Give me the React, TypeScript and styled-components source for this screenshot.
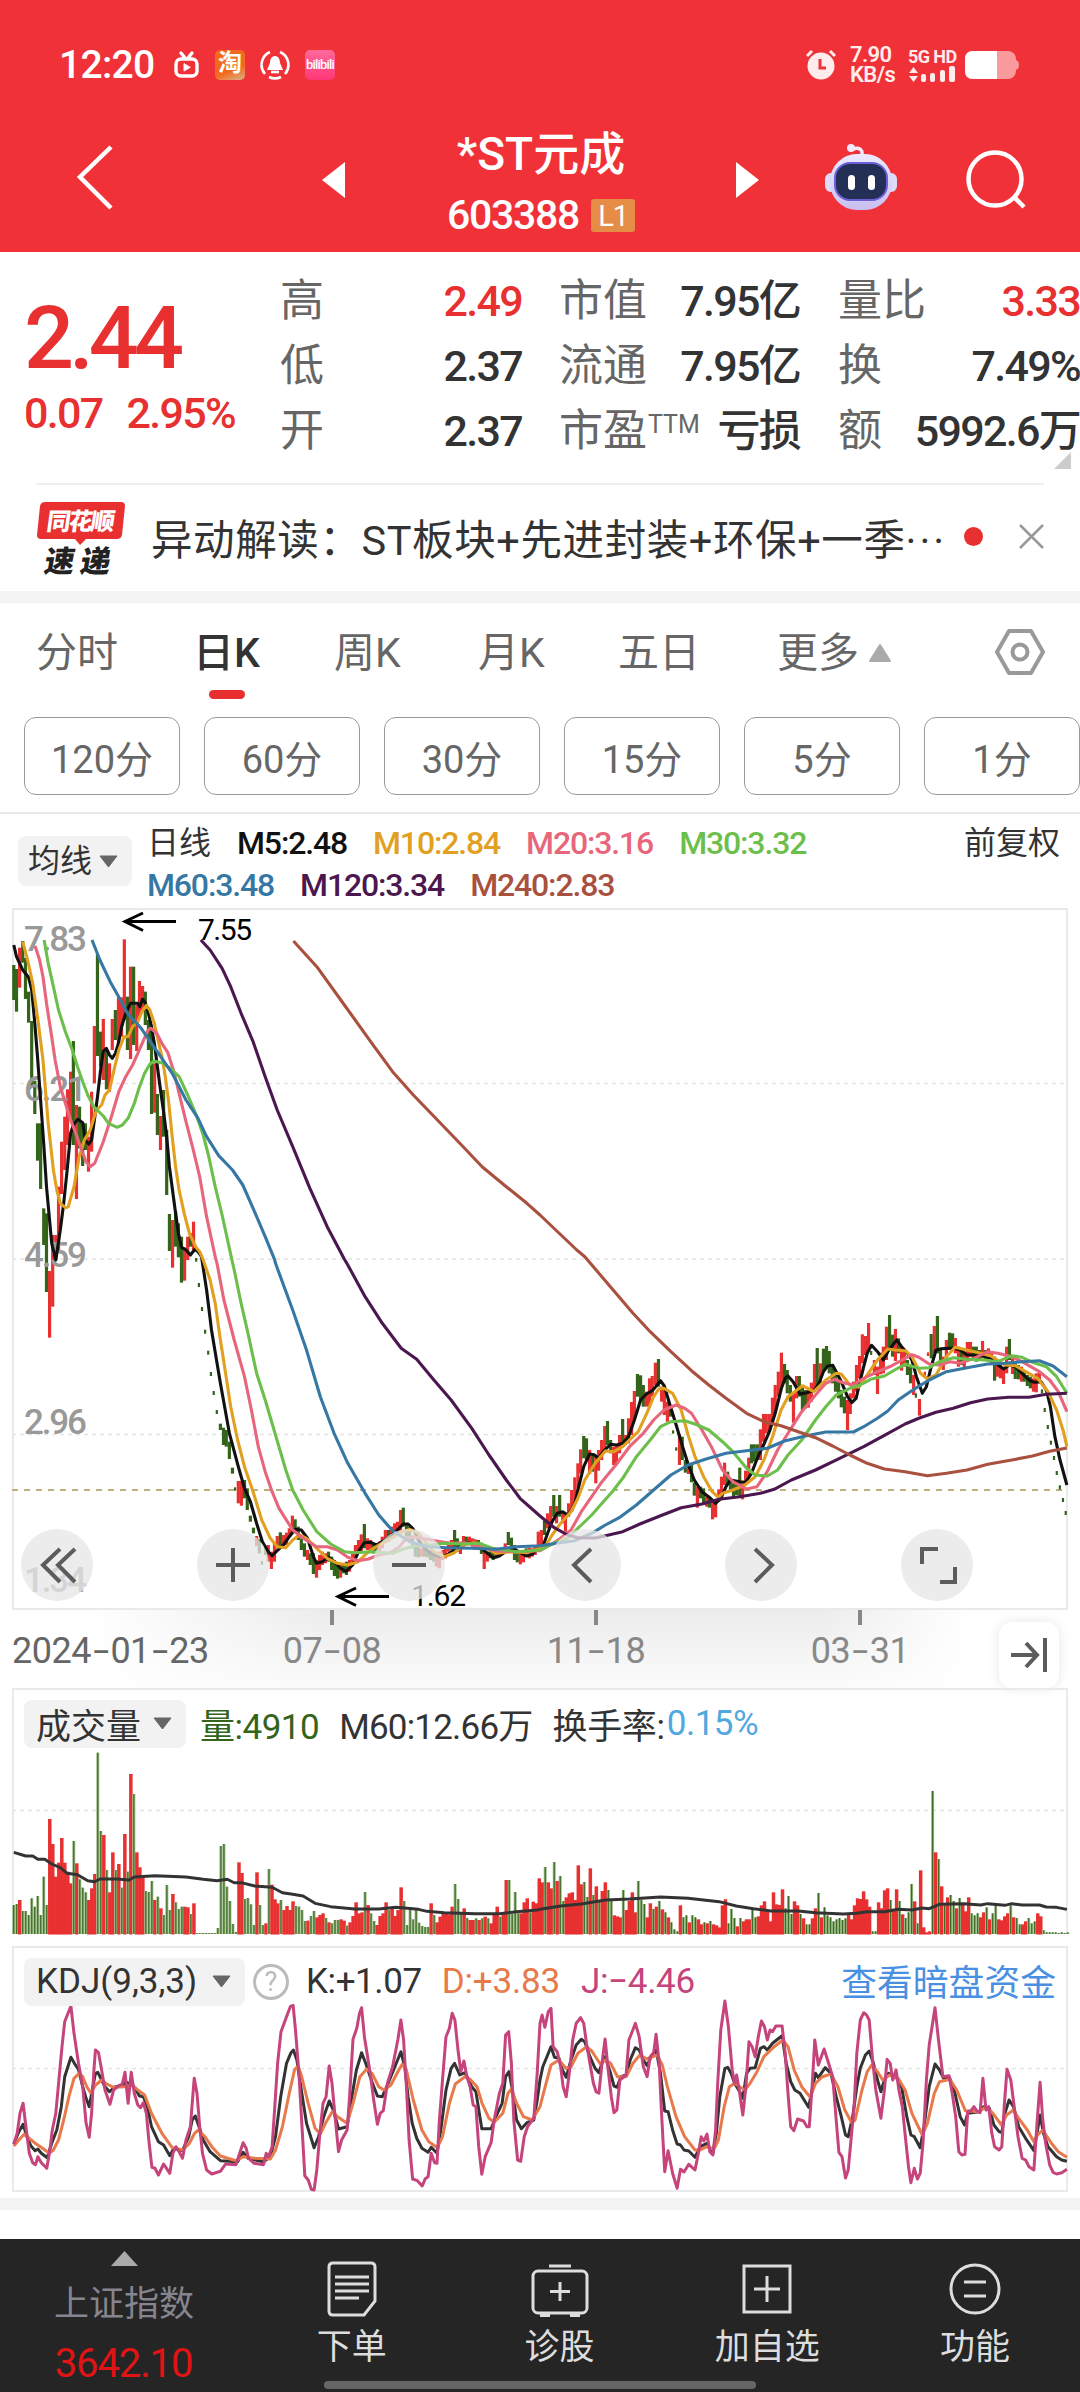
import React from 'react';
import styled, { createGlobalStyle } from 'styled-components';

const FONT = "Roboto, 'Noto Sans CJK SC', sans-serif";

const RED = '#e83030';
const GREEN = '#34641a';

// One unit of the recorded series is UX by UY pixels
const UX = 540 / 1568;
const UY = 1 / 3;

type Part = { x: number; y: number; d: string };

const points = (parts: Part[]) =>
  parts
    .map((p) =>
      p.d
        .trim()
        .split(/\s+/)
        .map((pair) => {
          const [a, b] = pair.split(',').map(Number);
          return `${(p.x + a * UX).toFixed(1)},${(p.y + b * UY).toFixed(1)}`;
        })
        .join(' ')
    )
    .join(' ');

const topLeft = (d: string): Part => ({ x: 0, y: -18, d });
const bottomLeft = (d: string): Part => ({ x: 0, y: 342, d });
const bottomRight = (d: string): Part => ({ x: 540, y: 342, d });
const kdjLeft = (d: string): Part => ({ x: 0, y: -6, d });
const kdjRight = (d: string): Part => ({ x: 540, y: -6, d });

const candleParts: Part[] = [
  topLeft(`g40,225,330 g48,237,365 r57,173,293 g66,153,218 g74,204,327 g83,305,398 g92,393,590 g101,572,672 g109,700,812
  g118,700,897 g127,955,1065 g135,970,1206 r144,1143,1343 r153,1035,1250 r162,1035,1110 r170,890,1080 r179,755,912
  r188,680,840 r196,598,765 r205,545,690 g213,453,765 r222,645,927 g231,650,775 g240,700,828 g248,700,780 r257,740,845
  r266,605,785 r274,408,580 g283,192,498 g292,425,530 r300,387,570 g309,480,598 r318,520,605 r326,387,480 g335,360,450
  r344,322,465 r353,322,440 r361,148,390 g370,320,480 r379,230,507 g388,230,465 r397,345,483 r405,273,380 r414,288,360
  g422,305,405 g431,390,480 g440,420,672 r449,520,668 g457,612,735 r466,678,780 g475,600,740 g484,720,915 g492,972,1083
  r501,990,1133 g510,965,1070 g518,1000,1102 g527,1040,1178 r536,1072,1172 r545,1040,1110 g553,1030,1070 r562,995,1080`),
  bottomLeft(`g571,24,35 g579,99,111 g588,171,183 g597,239,251 g606,302,314 g614,366,378 g622,423,435 g631,480,492 g640,521,540
  g649,533,585 g657,540,590 g666,575,627 g675,653,671 g684,712,722 r692,693,760 r701,693,767 g710,690,745 g718,715,780
  g727,797,815 g736,833,850 r745,858,888 g753,868,910 g762,933,944 g771,890,915 r779,885,935 r788,905,957 r797,880,935
  r805,858,895 g814,847,890 r823,855,885 r832,848,885 r840,835,860 r849,797,850 g857,808,842 g866,830,870 g875,865,900
  g884,880,920 r893,900,930 g901,910,945 g910,910,972 r919,930,983 r928,915,960 r936,905,945 r945,910,940 g954,905,935
  g963,920,960 g971,930,978 g980,940,986 r989,945,983 g997,945,970 g1006,935,975 r1015,930,965 r1024,905,945
  r1032,885,930 r1041,870,910 r1049,853,905 g1058,822,895 r1067,865,900 r1076,870,900 g1084,880,910 g1093,885,910
  r1102,875,905 r1110,860,895 r1119,840,880 g1128,840,875 r1137,830,865 r1146,820,855 r1154,815,850 r1163,780,845
  g1171,773,830 g1180,820,860 g1189,830,870 g1198,860,895 g1206,880,920 g1215,890,922 r1224,895,920 g1233,895,920
  g1241,900,922 g1250,900,930 g1259,905,935 r1267,910,950 r1276,905,955 r1285,900,930 r1293,895,925 r1302,885,905
  r1311,870,900 g1320,840,895 g1328,865,905 r1337,880,912 r1346,858,890 g1354,860,885 r1363,860,885 r1372,865,890
  r1380,868,890 g1389,870,895 g1398,878,912 r1406,900,957 r1415,905,935 g1424,900,925 g1432,905,930 r1441,900,925
  r1450,895,915 r1459,893,915 r1467,880,905 g1476,846,885 g1485,863,900 g1494,885,930 g1502,905,937 r1511,910,943
  r1520,905,937 g1528,895,920 r1537,893,925 r1546,895,920 r1554,888,915 r1563,845,905`),
  bottomRight(`r4,840,885 g13,812,855 r22,790,835 r31,768,820 g40,735,800 r48,768,820 g57,735,800 r66,785,820 r74,795,845
  r83,760,800 r92,720,785 r101,682,760 r110,640,715 r118,598,670 g127,558,625 g135,565,630 r144,600,672 g153,618,665
  r162,620,700 r170,600,662 r179,570,630 r188,528,600 g196,513,585 g205,570,610 r214,590,645 r222,585,645 r231,555,610
  g240,507,585 r248,555,585 r257,505,580 r266,456,555 r274,423,510 g283,372,440 g292,376,455 g300,405,470 r309,425,470
  r318,385,470 r326,378,440 r335,338,405 g344,327,410 r353,410,455 r361,420,495 r370,455,515 g379,465,500 g388,541,551
  g397,592,602 r405,553,645 g413,560,630 g422,630,668 r431,645,672 g440,640,697 g448,698,737 r457,710,773 g466,710,745
  g475,715,765 r484,740,770 g492,745,773 r501,755,808 r510,755,802 r519,718,755 r527,680,735 r536,638,705 g545,665,700
  g553,690,720 g562,700,740 g571,695,735 g580,653,740 r588,700,748 r597,662,705 r606,623,680 g614,583,640 g622,583,635
  g631,583,630 r640,538,630 r649,492,575 r657,492,550 r666,492,545 r675,443,525 r683,405,485 r692,365,440 r701,308,410
  g710,342,400 g718,360,430 g727,405,455 r736,430,518 r745,378,445 g753,378,440 g762,410,480 g771,420,475 r779,420,473
  r788,398,455 r797,342,425 g805,294,420 r814,340,400 g823,296,365 g832,288,352 g840,303,370 g849,345,400 g858,365,425
  g867,395,445 g875,420,472 g884,440,490 r893,450,540 r901,430,492 r910,395,445 r919,345,425 r928,318,385 r936,253,340
  r945,258,315 r954,219,300 g963,303,315 r971,330,375 r980,350,432 r989,308,373 r997,290,370 r1006,230,330
  g1015,195,300 g1024,254,320 r1032,237,333 g1041,265,310 r1050,290,362 r1058,300,350 g1067,330,375 g1076,345,400
  r1085,375,435 g1093,430,443 r1102,447,497 r1119,365,378 r1128,307,318 g1136,252,325 r1145,228,310 g1154,198,310
  g1163,300,345 r1171,320,360 r1180,270,325 g1189,248,300 g1198,250,300 r1206,264,310 r1215,290,350 g1224,300,345
  r1232,305,355 r1241,276,330 r1250,276,320 g1259,290,330 g1267,290,335 g1276,300,332 r1285,273,325 g1294,300,330
  r1302,295,330 r1311,305,345 g1320,320,392 r1328,335,380 r1337,345,385 r1346,350,402 r1355,290,370 g1363,267,330
  r1372,325,372 g1380,340,387 g1389,345,388 r1398,350,395 g1406,365,395 g1415,375,408 g1424,380,415 r1433,385,425
  r1441,370,427 r1450,365,400 g1459,418,430 g1467,474,486 g1476,525,537 g1485,572,584 g1494,618,630 g1502,663,675
  g1511,706,718 g1520,744,756 g1528,783,795`),
];

const averages: { color: string; parts: Part[] }[] = [
  {
    color: '#111',
    parts: [
      topLeft(`40,165 48,200 66,240 83,262 92,300 101,400 109,500 118,630 127,760 135,890 150,1060 162,1110 175,1020 185,940
      196,830 205,730 213,705 226,688 240,698 248,752 258,762 266,750 274,690 283,620 292,540 300,484 309,475 318,495
      326,505 335,490 344,460 353,410 365,370 379,340 400,340 406,350 414,328 422,338 431,370 440,410 449,465 457,530
      466,600 475,665 484,740 492,830 501,900 510,970 518,1030 527,1072 540,1080 553,1095 566,1078 575,1085`),
      bottomLeft(`585,20 600,120 614,240 640,400 666,550 692,650 710,715 727,755 745,820 762,875 779,905 790,917 805,902
      823,885 840,860 857,838 875,840 893,865 910,920 919,940 936,935 954,922 971,935 989,955 1005,964 1024,945 1041,905
      1058,878 1076,877 1093,885 1110,875 1137,855 1154,840 1171,822 1185,822 1198,835 1206,850 1215,870 1233,895
      1250,910 1276,920 1293,918 1311,905 1328,895 1346,878 1372,880 1389,888 1406,902 1432,923 1450,918 1476,900
      1494,897 1511,908 1528,918 1546,912 1568,890`),
      bottomRight(`10,885 22,850 35,815 50,790 66,785 80,795 92,780 101,760 110,720 127,650 144,612 157,614 170,625 188,600
      205,583 222,585 240,580 257,560 274,510 292,450 309,432 326,422 340,405 350,392 361,408 379,470 397,530 414,590
      431,645 448,690 470,725 495,745 510,760 525,745 540,710 553,690 580,695 597,697 614,670 631,625 649,585 666,545
      683,490 701,415 712,385 720,378 735,395 755,432 775,428 797,420 810,400 823,365 835,348 850,346 860,365 875,395
      893,440 905,458 918,445 928,400 940,350 950,310 963,286 980,305 997,330 1010,305 1024,285 1036,270 1050,290
      1067,310 1080,330 1093,380 1110,430 1122,410 1136,350 1150,300 1165,296 1200,294 1220,300 1240,315 1276,315
      1311,325 1330,345 1346,357 1363,345 1380,350 1400,370 1420,390 1435,397 1455,395 1470,420 1482,470 1495,560
      1510,630 1530,705`),
    ],
  },
  {
    color: '#e2a021',
    parts: [
      topLeft(`66,155 80,210 95,280 110,390 125,510 140,700 155,840 165,900 175,940 190,953 198,950 215,890 230,800 245,750
      262,720 280,660 295,645 305,615 318,600 330,545 345,480 360,440 372,440 385,410 400,395 412,365 425,346 435,360
      448,400 460,455 470,500 480,560 490,640 500,740 510,830 520,900 535,970 550,1030 568,1070 580,1085`),
      bottomLeft(`590,30 610,90 625,160 640,270 655,370 670,470 690,570 710,650 735,725 760,810 785,865 805,890 830,893
      850,870 870,855 890,865 920,895 950,925 980,940 1010,945 1040,935 1070,905 1100,885 1130,868 1160,850 1190,838
      1215,850 1235,875 1260,905 1290,920 1320,908 1345,885 1375,878 1410,892 1440,910 1490,905 1530,908 1568,895`),
      bottomRight(`15,890 35,855 60,820 90,785 110,745 130,690 160,640 190,603 215,605 240,590 260,570 285,545 310,490
      330,440 345,417 360,415 385,430 410,480 430,555 450,620 475,680 500,725 518,742 530,730 560,720 595,705 625,680
      650,630 675,560 700,480 720,440 740,425 762,407 795,425 830,390 860,370 875,372 900,405 925,412 950,375 980,330
      1010,297 1030,300 1060,302 1080,320 1105,370 1125,387 1150,375 1180,320 1205,292 1240,300 1280,310 1310,318
      1350,345 1380,347 1410,365 1445,385 1475,425 1500,480 1520,545 1530,590`),
    ],
  },
  {
    color: '#e8667b',
    parts: [
      topLeft(`102,168 115,210 125,260 135,340 150,440 160,510 175,590 190,640 205,690 220,730 235,775 250,815 262,830
      275,820 300,755 325,675 345,605 365,560 385,525 400,490 415,455 430,420 438,415 455,430 470,460 487,487 505,545
      520,610 540,695 560,775 580,860 600,980 625,1100`),
      bottomLeft(`630,40 650,150 680,270 710,380 730,480 750,590 770,665 790,725 810,775 850,840 880,865 920,890 950,890
      980,900 1010,922 1040,932 1070,927 1100,915 1130,910 1160,890 1180,865 1200,860 1240,868 1280,875 1310,880
      1350,878 1400,890 1440,903 1500,905 1568,902`),
      bottomRight(`30,885 60,865 90,840 120,785 150,740 180,695 220,645 260,590 300,550 330,510 360,480 395,465 420,475
      440,490 470,540 500,595 530,660 560,695 600,717 630,710 660,665 690,600 720,550 760,485 800,435 830,400 855,388
      880,398 910,405 940,385 980,365 1020,348 1060,325 1080,314 1100,322 1130,342 1160,345 1190,335 1220,340 1260,325
      1300,305 1330,310 1370,320 1400,335 1450,365 1480,390 1505,425 1530,485`),
    ],
  },
  {
    color: '#6dbf4b',
    parts: [
      topLeft(`128,150 140,220 155,290 170,360 190,425 210,480 225,530 240,575 255,615 272,650 300,678 315,700 340,712
      355,705 372,685 390,640 405,590 420,550 435,523 447,513 475,520 500,540 520,560 545,615 570,675 590,735 605,795
      625,890 645,975 673,1108`),
      bottomLeft(`680,60 700,160 720,250 745,370 770,450 800,555 830,660 850,720 880,780 920,845 960,882 1000,905 1030,908
      1080,905 1140,910 1170,898 1210,885 1250,885 1290,880 1340,882 1390,880 1430,895 1500,905 1568,900`),
      bottomRight(`40,880 80,865 120,825 150,795 180,760 210,725 240,685 280,620 320,570 350,530 380,515 420,512 450,522
      490,540 530,575 560,605 600,655 625,675 660,678 690,660 720,615 760,570 800,510 830,470 860,435 900,415 930,405
      960,388 1000,378 1030,360 1060,343 1100,355 1130,353 1160,335 1200,323 1240,328 1290,330 1330,335 1370,317
      1400,322 1430,337 1470,350 1500,380 1530,430`),
    ],
  },
  {
    color: '#3677a4',
    parts: [
      topLeft(`267,150 290,210 320,275 350,330 370,370 410,415 440,460 470,505 500,550 540,630 575,685 600,740 635,797
      675,840 705,885 735,955 770,1040 797,1108`),
      bottomLeft(`800,40 850,180 890,300 930,440 970,550 1010,640 1060,730 1100,795 1140,842 1190,875 1240,890 1300,893
      1370,895 1440,898 1500,890 1568,887`),
      bottomRight(`50,880 100,872 150,850 190,825 230,803 280,765 330,720 380,675 430,645 480,628 540,610 600,602 660,595
      710,573 770,558 830,546 910,546 940,530 980,505 1010,483 1040,450 1090,415 1130,390 1180,365 1240,353 1300,342
      1350,340 1400,335 1450,332 1490,348 1530,380`),
    ],
  },
  {
    color: '#4b174f',
    parts: [
      topLeft(`583,150 610,180 645,235 670,290 700,370 735,455 770,560 805,660 850,770 900,895 950,1010 1000,1108`),
      bottomLeft(`1010,45 1060,140 1110,220 1165,295 1210,328 1260,390 1310,450 1370,535 1420,615 1470,690 1510,745
      1568,798`),
      bottomRight(`40,832 80,855 110,863 160,864 190,857 240,845 290,822 350,797 410,773 470,762 520,748 580,740 640,730
      680,718 730,690 800,660 870,625 940,590 1000,556 1060,522 1100,505 1150,487 1200,475 1250,458 1300,447 1360,442
      1420,442 1470,433 1530,430`),
    ],
  },
  {
    color: '#a9503f',
    parts: [
      topLeft(`852,153 920,230 1000,345 1080,460 1140,545 1200,615 1270,690 1340,765 1400,830 1470,890 1530,940 1568,975`),
      bottomRight(`107,0 130,20 200,105 270,190 320,245 380,305 440,362 490,405 540,445 600,490 650,515 700,527 750,545
      800,563 850,588 900,615 950,640 1000,657 1060,665 1125,677 1180,670 1240,660 1300,643 1370,630 1430,618 1480,604
      1530,594`),
    ],
  },
];

// Bar tops for the two halves of the volume pane, oldest first
const volumeOld = `g1005 g1002 r990 g1023 g1023 g1035 g985 g1010 g978 g1035 g920 g1005 r747 r822 r920 r878 r804 r878 r905
r940 g813 r880 g928 g953 g967 r990 r955 r912 g548 g783 r795 g900 r967 r847 g900 r882 g953 r792 g905 r612 g672 r847 r892
r920 g963 g966 g933 r990 g980 r1015 g1035 g945 g1020 r972 g997 g1017 g1010 r1010 r1012 g1032 r1000 g1089 g1089 g1089 g1089
g1089 g1089 g1089 g1074 g828 g822 g950 g993 g1062 g1086 r877 r909 g987 g984 g1003 g1065 r907 g1005 g1065 r1060 g897 r944
r988 r1000 g990 r1020 r1008 r1020 r994 g1008 g1010 g1020 g1053 r1052 g1038 g1023 r1042 r1035 r1030 g1044 r1057 g1060 g1050
g1050 r1048 r1052 g1067 r1057 r1038 r997 r1030 r1027 g966 r1005 g1030 g1053 r1065 r1038 r1030 r997 g1020 r1010 r1038 r1020
r952 g993 g1065 g1020 g1048 g1020 g1058 g1068 g1071 g1071 r1000 g1035 r1057 r1040 r1030 r1030 r1033 r1010 g942 g987 g1032
r1015 g1044 r1050 r1050 g1045 r1050 g1045 r1040 g1045 r1060 r1035 r1010 g1040 r1030 r930 g930 g1032 g966 g1030 r1030 r997
r985 g1027 r995 r1000 r925`;
const volumeNew = `r607 g561 r607 r625 g546 r603 g588 g663 r652 r640 r637 r660 r556 r613 g606 g651 r565 g645 r619 g660 r633
r607 g630 g657 r706 r709 r712 g630 r690 r663 r637 r697 g603 g660 g672 r712 r670 g687 r680 g663 r688 g697 r712 g727 g748
g754 r676 g712 g706 r727 g706 g712 r718 r733 g727 r730 g723 r733 r736 r742 r676 r658 g730 g687 g714 r739 g714 r724 r718
r718 g690 g712 r709 r676 r664 r690 r724 r637 r673 r675 r628 g685 g648 g702 r664 r676 g702 r715 g733 g733 r715 r685 g639
r712 g682 g706 g712 g724 g718 g714 g720 g715 r703 r718 r676 r655 r657 r634 r658 r680 g754 g754 r667 r685 r631 r625 g660
r690 r628 g663 r703 g714 g697 g612 r664 g730 r571 r742 r757 r754 g333 r517 g537 r619 g672 r652 g645 g663 r685 g654 r670
r694 r652 g700 g706 g700 r712 r697 g682 r718 g700 g676 r718 r721 r709 r700 g676 r712 g714 g733 r733 r724 g714 g730 g724
r700 r709 g751 g757 g757 g757 g757 g759 g757 g759 g757`;

const volumes = [
  ...volumeOld.split(/\s+/).map((s) => ({ up: s[0] === 'r', h: (1092 - Number(s.slice(1))) / 3 })),
  ...volumeNew.split(/\s+/).map((s) => ({ up: s[0] === 'r', h: (762 - Number(s.slice(1))) / 3 })),
];

const volumeAverage: Part[] = [
  {
    x: 0,
    y: -118,
    d: `40,847 75,858 95,858 110,868 130,868 150,882 175,893 195,910 225,914 255,932 275,935 290,927 340,927 375,930
    390,921 450,917 540,921 590,928 630,932 660,928 680,938 700,938 740,948 790,952 820,968 850,973 880,978 915,1000
    960,1010 1030,1017 1100,1017 1150,1012 1215,1018 1240,1024 1290,1028 1380,1031 1450,1031 1500,1025 1560,1020`,
  },
  {
    x: 540,
    y: -8,
    d: `0,688 60,678 120,672 190,660 260,657 350,651 430,655 520,665 570,678 620,686 670,693 750,693 800,698 880,702
    920,700 950,695 1000,695 1040,688 1080,690 1110,684 1130,686 1160,673 1230,671 1280,675 1300,671 1350,676 1370,671
    1400,675 1450,675 1470,681 1500,682 1530,688`,
  },
];

const kdj: { color: string; parts: Part[] }[] = [
  {
    color: '#333',
    parts: [
      kdjLeft(`40,612 55,575 67,553 78,590 90,618 102,632 110,627 120,640 137,653 150,610 165,570 178,500 188,410 206,352
      216,370 228,388 240,440 250,475 259,500 268,450 277,400 284,397 295,420 305,440 318,455 335,440 355,437 365,425
      383,435 395,450 405,468 416,470 428,500 440,560 460,605 475,615 493,647 505,625 530,632 548,590 558,540 567,528
      578,560 590,600 610,635 640,662 690,665 706,637 720,655 765,665 785,650 800,590 815,470 832,370 845,338 852,330
      862,360 875,450 890,550 912,623 925,590 940,530 956,483 968,510 983,567 1008,560 1020,480 1035,390 1050,338
      1062,370 1080,425 1096,468 1110,470 1125,435 1145,385 1164,335 1175,380 1185,470 1197,550 1210,595 1225,625
      1243,637 1252,622 1269,640 1280,570 1295,450 1310,385 1320,370 1335,405 1350,398 1370,440 1382,455 1399,566
      1426,566 1440,530 1458,490 1468,410 1478,395 1488,450 1500,540 1514,566 1530,548 1550,540 1560,480 1568,420`),
      kdjRight(`8,380 20,350 32,320 42,352 55,355 65,390 76,412 90,360 105,315 120,298 130,305 145,350 160,385 171,398
      180,370 189,350 205,400 215,438 224,442 235,410 250,405 262,360 277,323 288,330 300,360 311,377 325,345 337,330
      350,400 362,513 372,515 385,570 398,612 408,615 418,630 432,633 450,652 465,620 485,610 502,640 512,580 522,470
      537,385 545,382 555,400 565,430 580,455 589,475 600,400 610,385 625,383 640,325 650,320 660,330 675,310 703,287
      715,370 728,425 740,450 755,460 780,502 790,450 800,400 808,413 828,383 845,400 860,470 875,530 887,585 895,590
      908,530 920,440 930,385 945,345 956,333 968,370 980,420 990,455 1000,420 1012,400 1034,412 1050,440 1065,530
      1077,585 1087,590 1104,623 1115,560 1130,440 1147,372 1160,390 1172,415 1190,415 1205,460 1220,530 1233,555
      1242,520 1275,515 1288,500 1305,505 1318,555 1333,575 1341,578 1350,520 1362,480 1375,500 1390,560 1410,595
      1434,632 1443,580 1452,525 1462,580 1475,620 1500,650 1515,660 1530,664`),
    ],
  },
  {
    color: '#e8794a',
    parts: [
      kdjLeft(`40,618 55,600 70,583 85,595 105,612 120,622 143,640 155,630 170,600 185,540 200,470 215,415 230,400 240,410
      252,440 263,458 278,435 295,420 310,432 330,442 360,440 385,435 400,450 420,465 440,520 470,580 500,623 530,630
      550,610 565,580 576,570 595,590 615,620 640,648 685,662 706,650 740,655 785,657 800,630 820,560 840,460 855,390
      865,378 875,405 895,490 915,565 930,582 945,550 965,515 980,530 1008,550 1025,490 1045,410 1065,387 1080,400
      1100,440 1115,450 1135,435 1155,395 1168,373 1180,390 1200,480 1225,570 1245,605 1270,623 1285,590 1305,490
      1322,432 1350,410 1365,418 1385,440 1400,490 1420,535 1435,547 1460,520 1475,460 1485,447 1500,490 1520,530
      1545,540 1568,500`),
      kdjRight(`15,440 32,375 55,360 75,385 90,380 110,340 135,320 150,333 175,372 190,360 205,370 225,410 250,410 270,370
      290,345 310,357 340,345 355,375 370,440 395,530 420,590 450,630 465,630 485,620 505,628 518,600 535,500 550,440
      565,430 580,440 595,450 610,430 630,395 650,350 680,320 705,300 720,320 738,390 760,440 785,472 800,430 820,410
      845,402 865,440 885,510 905,548 915,540 935,450 950,395 963,375 980,395 995,420 1015,405 1040,415 1060,450
      1080,520 1110,585 1125,550 1145,460 1160,425 1190,418 1210,450 1235,512 1275,515 1295,500 1315,520 1340,555
      1355,525 1375,510 1390,535 1415,570 1434,605 1445,585 1460,570 1485,610 1505,635 1530,652`),
    ],
  },
  {
    color: '#c5447c',
    parts: [
      kdjLeft(`40,612 50,580 58,520 67,490 73,540 80,600 85,640 95,668 103,674 110,650 120,668 136,685 145,630 152,570
      162,520 172,410 180,320 188,245 206,198 215,280 228,370 240,440 250,550 259,592 266,520 272,400 277,330 286,338
      295,390 305,450 319,493 330,450 345,437 355,432 363,397 372,490 381,397 390,460 400,495 408,503 416,488 425,520
      432,600 441,682 450,685 460,705 475,672 493,700 502,640 511,620 520,635 530,655 540,600 553,560 564,415 572,460
      580,560 588,640 600,690 615,702 640,694 655,672 685,674 696,640 706,608 715,625 722,655 738,670 765,674 773,640
      780,650 790,620 798,500 806,370 816,275 832,230 843,200 851,196 858,270 868,400 877,560 885,707 895,720 904,748
      912,750 920,690 928,590 938,490 947,470 956,378 964,430 974,540 983,635 992,600 1008,570 1015,470 1025,298
      1036,265 1044,220 1050,203 1058,290 1075,400 1085,480 1096,553 1104,520 1113,512 1125,430 1140,380 1155,300
      1164,240 1172,300 1180,440 1188,600 1198,717 1212,722 1226,738 1235,716 1243,710 1252,640 1262,668 1269,670
      1276,540 1285,420 1295,290 1305,265 1313,220 1321,240 1330,330 1338,395 1347,363 1356,410 1365,440 1374,495
      1382,500 1390,620 1399,703 1409,650 1426,608 1435,540 1450,460 1460,430 1468,285 1477,275 1485,370 1492,540
      1503,660 1512,664 1522,590 1532,560 1550,535 1560,400 1568,250`),
      kdjRight(`6,225 14,262 24,215 32,205 38,320 50,335 60,380 67,440 76,470 85,400 95,300 105,250 118,233 127,250 135,310
      145,370 155,430 163,455 171,460 180,370 189,297 198,390 207,470 215,518 223,510 232,420 250,405 258,300 266,280
      277,250 288,290 300,380 311,410 320,350 330,340 337,283 346,370 352,500 362,695 372,632 385,700 398,745 408,688
      418,696 432,673 450,690 460,640 468,590 476,603 485,582 493,635 502,645 510,570 516,430 525,270 537,183 547,260
      558,390 565,430 571,405 580,460 589,525 598,440 607,305 616,320 625,350 634,290 643,243 652,260 660,300 668,270
      675,275 685,258 703,258 712,340 720,460 728,560 737,572 748,537 765,543 775,560 782,560 790,440 798,300 808,375
      825,327 838,370 850,410 860,540 868,637 877,650 887,714 895,690 903,600 912,500 920,340 930,240 940,218 948,225
      956,240 965,350 975,450 990,535 1000,450 1008,358 1017,370 1024,420 1034,390 1042,450 1052,500 1062,600 1070,680
      1077,728 1087,685 1096,717 1104,700 1112,610 1122,420 1130,315 1140,250 1147,203 1157,300 1170,410 1188,407
      1197,460 1207,530 1216,635 1225,645 1234,643 1242,515 1252,512 1260,500 1268,512 1278,518 1286,415 1295,510
      1303,500 1312,580 1320,620 1333,630 1341,620 1348,500 1356,388 1367,420 1377,500 1388,590 1400,655 1410,660
      1420,680 1434,690 1443,550 1452,427 1460,540 1468,610 1480,675 1490,697 1500,702 1515,698 1530,688`),
    ],
  },
];

const GlobalStyle = createGlobalStyle`
  * { box-sizing: border-box; }
  body { margin: 0; background: #fff; }
`;

const Page = styled.div`
  width: 1080px;
  height: 2392px;
  overflow: hidden;
  display: flex;
  flex-direction: column;
  background: #fff;
  color: #333;
  font-family: ${FONT};
  white-space: nowrap;

  svg { display: block; flex-shrink: 0; }
`;

const Header = styled.header`
  height: 252px;
  flex-shrink: 0;
  background: #f03138;
  color: #fff;
`;

const StatusBar = styled.div`
  height: 112px;
  padding: 18px 61px 0 59px;
  display: flex;
  align-items: center;
`;

const Clock = styled.span`
  width: 114px;
  font-size: 39px;
  font-weight: 500;
  letter-spacing: -0.7px;
`;

const StatusIcons = styled.div`
  display: flex;
  align-items: center;
  gap: 15px;
`;

const TaobaoIcon = styled.div`
  width: 30px;
  height: 30px;
  border-radius: 5px;
  background: linear-gradient(160deg, #f36a1f 65%, #d8b48c);
  font-size: 24px;
  line-height: 27px;
  font-weight: 700;
  text-align: center;
`;

const BiliIcon = styled.div`
  width: 30px;
  height: 30px;
  border-radius: 5px;
  background: linear-gradient(#ff6a9b, #ff3676);
  font-size: 13px;
  line-height: 29px;
  font-weight: 500;
  letter-spacing: -0.8px;
  text-align: center;
`;

const StatusRight = styled.div`
  margin-left: auto;
  display: flex;
  align-items: center;
`;

const NetSpeed = styled.div`
  width: 45px;
  margin-left: 14px;
  color: #ffecec;
  font-size: 22px;
  line-height: 20px;
  font-weight: 600;
  letter-spacing: -0.6px;
`;

const Signal = styled.div`
  width: 48px;
  margin: 0 9px 0 13px;
  color: #ffecec;
  font-size: 18px;
  line-height: 17px;
  font-weight: 700;
  letter-spacing: -0.6px;
`;

const NavBar = styled.nav`
  height: 136px;
  display: flex;
  align-items: center;
  padding: 0 48px 0 76px;
`;

const Title = styled.div`
  width: 390px;
  display: flex;
  flex-direction: column;
  align-items: center;
  padding-top: 8px;
`;

const StockName = styled.div`
  font-size: 46px;
  line-height: 62px;
  font-weight: 500;
`;

const StockCode = styled.div`
  display: flex;
  align-items: center;
  gap: 12px;
  font-size: 41px;
  line-height: 60px;
  letter-spacing: -1.3px;
  font-weight: 500;
`;

const Level = styled.span`
  width: 44px;
  height: 33px;
  background: #e58d46;
  border-radius: 3px;
  font-size: 29px;
  line-height: 34px;
  font-weight: 400;
  text-align: center;
`;

const Quote = styled.section`
  height: 231px;
  flex-shrink: 0;
  display: flex;
  padding-top: 16px;
`;

const PriceBlock = styled.div`
  width: 280px;
  padding: 21px 0 0 24px;
  color: ${RED};
`;

const Price = styled.div`
  font-size: 88px;
  line-height: 97px;
  font-weight: 500;
  letter-spacing: -4.8px;
`;

const Change = styled.div`
  display: flex;
  gap: 24px;
  font-size: 43px;
  line-height: 54px;
  font-weight: 500;
  letter-spacing: -1.7px;
`;

const Stats = styled.div<{ $width: number; $gap: number }>`
  width: ${(p) => p.$width}px;
  margin-right: ${(p) => p.$gap}px;
`;

const StatRow = styled.div`
  height: 65px;
  display: flex;
  align-items: center;
  justify-content: space-between;
`;

const StatLabel = styled.span`
  position: relative;
  font-size: 44px;
  line-height: 62px;
  color: #666;

  sup {
    position: absolute;
    left: 89px;
    top: 13px;
    font-size: 25px;
    line-height: 24px;
  }
`;

const StatValue = styled.span<{ $up?: boolean }>`
  font-size: 43px;
  line-height: 62px;
  font-weight: 500;
  letter-spacing: -1.7px;
  color: ${(p) => (p.$up ? RED : '#333')};
`;

const Corner = styled.div`
  width: 17px;
  height: 17px;
  margin: -31px 9px 14px auto;
  flex-shrink: 0;
  background: #ccc;
  clip-path: polygon(100% 0, 100% 100%, 0 100%);
`;

const NewsRow = styled.section`
  height: 108px;
  flex-shrink: 0;
  margin: 0 36px;
  padding-bottom: 3px;
  border-top: 2px solid #eee;
  display: flex;
  align-items: center;
`;

const NewsText = styled.div`
  width: 813px;
  margin-left: 25px;
  font-size: 41.5px;
  letter-spacing: 0.6px;

  span { letter-spacing: 3px; }
`;

const NewsDot = styled.i`
  width: 19px;
  height: 19px;
  margin: 0 36px 0 auto;
  border-radius: 50%;
  background: ${RED};
`;

const Band = styled.div`
  height: 12px;
  flex-shrink: 0;
  background: #f4f4f4;
`;

const Tabs = styled.nav`
  height: 114px;
  flex-shrink: 0;
  display: flex;
  align-items: flex-start;
  padding: 20px 34px 0 36px;
`;

const Tab = styled.div<{ $width: number; $active?: boolean }>`
  width: ${(p) => p.$width}px;
  display: flex;
  align-items: center;
  gap: 9px;
  font-size: 41px;
  line-height: 60px;
  color: ${(p) => (p.$active ? '#333' : '#666')};
  font-weight: ${(p) => (p.$active ? 500 : 400)};
`;

const ActiveTab = styled.div`
  width: 141px;

  &::after {
    content: '';
    display: block;
    width: 36px;
    height: 9px;
    margin: 7px 0 0 16px;
    border-radius: 5px;
    background: ${RED};
  }
`;

const Periods = styled.div`
  height: 97px;
  flex-shrink: 0;
  display: flex;
  gap: 24px;
  padding-left: 24px;
  border-bottom: 2px solid #e8e8e8;
`;

const Period = styled.button`
  width: 156px;
  height: 78px;
  flex-shrink: 0;
  padding: 0;
  border: 1.5px solid #999;
  border-radius: 12px;
  background: #fff;
  color: #666;
  font-family: ${FONT};
  font-size: 38px;
`;

const Legend = styled.div`
  height: 94px;
  flex-shrink: 0;
  display: flex;
  padding: 8px 20px 0 18px;
`;

const Picker = styled.div<{ $width: number; $height: number; $top?: number }>`
  width: ${(p) => p.$width}px;
  height: ${(p) => p.$height}px;
  margin-top: ${(p) => p.$top ?? 0}px;
  padding: 0 14px 0 12px;
  display: flex;
  align-items: center;
  justify-content: space-between;
  background: #f2f2f2;
  border-radius: 8px;
  flex-shrink: 0;
`;

const LegendLines = styled.div`
  margin-left: 15px;
  flex: 1;
`;

const LegendRow = styled.div`
  height: 42px;
  display: flex;
  align-items: center;
  gap: 26px;
  font-size: 32px;
  font-weight: 500;
  letter-spacing: -1.15px;
`;

const Tone = styled.span<{ $color: string }>`
  color: ${(p) => p.$color};
`;

const Plain = styled.span`
  font-size: 32px;
  font-weight: 400;
  line-height: 42px;
  letter-spacing: 0;
`;

const PickerText = styled(Plain)`
  margin-left: -2px;
`;

const PricePane = styled.section`
  position: relative;
  height: 702px;
  flex-shrink: 0;
`;

const Controls = styled.div`
  position: absolute;
  left: 21px;
  bottom: 9px;
  display: flex;
  gap: 104px;
`;

const Control = styled.button`
  width: 72px;
  height: 72px;
  padding: 0;
  border: 0;
  border-radius: 50%;
  background: rgba(230, 230, 230, 0.76);
  display: flex;
  align-items: center;
  justify-content: center;
`;

const Axis = styled.div`
  height: 78px;
  flex-shrink: 0;
  display: flex;
  background:
    linear-gradient(90deg, #fff 8%, rgba(255, 255, 255, 0) 30%, rgba(255, 255, 255, 0) 76%, #fff 90%),
    linear-gradient(#ececec, #fbfbfb);
`;

const AxisItem = styled.div<{ $width: number; $tick?: boolean; $pad?: number }>`
  width: ${(p) => p.$width}px;
  padding-left: ${(p) => p.$pad ?? 0}px;
  text-align: ${(p) => (p.$tick ? 'center' : 'left')};
  color: ${(p) => (p.$tick ? '#888' : '#666')};
  font-size: 36px;
  line-height: 53px;
  letter-spacing: -0.5px;

  &::before {
    content: '';
    display: block;
    width: 4px;
    height: 15px;
    margin: 0 auto;
    background: ${(p) => (p.$tick ? '#888' : 'transparent')};
  }
`;

const Dash = styled.span`
  display: inline-block;
  margin: 0 5px;
  transform: scaleX(1.6);
`;

const LatestButton = styled.button`
  width: 60px;
  height: 66px;
  margin: 12px 21px 0 auto;
  padding: 0;
  border: 0;
  border-radius: 13px;
  background: #fff;
  box-shadow: 0 0 12px rgba(0, 0, 0, 0.1);
  display: flex;
  align-items: center;
  justify-content: center;
`;

const Pane = styled.section<{ $height: number }>`
  position: relative;
  height: ${(p) => p.$height}px;
  flex-shrink: 0;

  > svg { position: absolute; left: 0; top: 0; }
`;

const PaneHead = styled.div`
  position: relative;
  height: 71px;
  display: flex;
  align-items: center;
  padding: 0 24px;
  font-size: 35px;
`;

const Reading = styled.span<{ $color?: string; $gap: number; $spacing?: number }>`
  margin-left: ${(p) => p.$gap}px;
  color: ${(p) => p.$color || '#333'};
  letter-spacing: ${(p) => p.$spacing ?? 0}px;
`;

const Help = styled.span`
  width: 36px;
  height: 36px;
  margin-left: 8px;
  border: 3px solid #bbb;
  border-radius: 50%;
  color: #bbb;
  font-size: 27px;
  line-height: 31px;
  text-align: center;
`;

const Link = styled.span`
  margin: 0 0 3px auto;
  color: #4a90e2;
  font-size: 35.8px;
`;

const Footer = styled.footer`
  position: relative;
  height: 153px;
  margin-top: 29px;
  flex-shrink: 0;
  background: #252525;
  display: flex;
`;

const IndexBox = styled.div`
  width: 248px;
  display: flex;
  flex-direction: column;
  align-items: center;
  padding-top: 12px;
  font-size: 35px;
  line-height: 56px;
  color: #85858f;
`;

const IndexValue = styled.div`
  color: #e01414;
  font-size: 40px;
  line-height: 52px;
  letter-spacing: -1.1px;
  margin: 5px 0 0 -1px;
`;

const IndexName = styled.div`
  margin-top: 11px;
`;

const Action = styled.div`
  width: 207.7px;
  display: flex;
  flex-direction: column;
  align-items: center;
  padding-top: 21px;
  font-size: 35px;
  line-height: 56px;
  color: #ddd;
`;

const HomeBar = styled.div`
  position: absolute;
  left: 324px;
  bottom: 3px;
  width: 432px;
  height: 8px;
  border-radius: 4px;
  background: #666;
`;

const Caret = () => (
  <svg width="19" height="13" viewBox="0 0 19 13">
    <path d="M1 1h17L9.500 12z" fill="#666" stroke="#666" strokeLinejoin="round" />
  </svg>
);

const StatusLeftIcons = () => (
  <StatusIcons>
    <svg width="27" height="30" viewBox="0 0 27 30" fill="none" stroke="#fff" strokeWidth="3.4" strokeLinecap="round">
      <path d="M8 3l4 5M19 3l-4 5" />
      <rect x="3" y="9" width="21" height="17" rx="5" />
      <path d="M11 14v7l6-3.500z" fill="#fff" strokeWidth="1" />
    </svg>
    <TaobaoIcon>淘</TaobaoIcon>
    <svg width="30" height="30" viewBox="0 0 30 30" fill="none" stroke="#fff" strokeWidth="2.600">
      <path d="M10 2A14 14 0 0 0 5 24M20 2a14 14 0 0 1 5 22M9 27a14 14 0 0 0 12 0" />
      <path d="M15 6c-4 0-5 4-5 7l-3 7h16l-3-7c0-3-1-7-5-7z" fill="#fff" stroke="none" />
      <path d="M11 22h8" />
    </svg>
    <BiliIcon>bilibili</BiliIcon>
  </StatusIcons>
);

const Robot = () => (
  <svg width="74" height="72" viewBox="0 0 74 72">
    <defs>
      <linearGradient id="shell" x1="0" y1="0" x2="0" y2="1">
        <stop offset="0" stopColor="#eceaff" />
        <stop offset="1" stopColor="#c9bff0" />
      </linearGradient>
    </defs>
    <path d="M38 12c1-7-3-9-9-7" fill="none" stroke="#f6e8f8" strokeWidth="3.500" />
    <circle cx="27" cy="4" r="4" fill="#f6e8f8" />
    <rect x="1" y="29" width="12" height="19" rx="6" fill="#dcdcfa" />
    <rect x="61" y="29" width="12" height="19" rx="6" fill="#dcdcfa" />
    <rect x="6" y="10" width="62" height="56" rx="27" fill="url(#shell)" />
    <rect x="11" y="19" width="52" height="37" rx="15" fill="#232f55" stroke="#6b5fd8" strokeWidth="2" />
    <rect x="24" y="31" width="7" height="15" rx="3.500" fill="#fff" />
    <rect x="44" y="31" width="7" height="15" rx="3.500" fill="#fff" />
  </svg>
);

const NewsLogo = () => (
  <svg width="90" height="76" viewBox="0 0 90 76">
    <path d="M9 3h76q4 0 4 4l-3 29q-1 4-5 4H50l-6 6-5-6H5q-4 0-4-4L4 7q1-4 5-4z" fill={RED} />
    <g fontFamily="Noto Sans CJK SC" fontWeight="900" textAnchor="middle">
      <text x="48" y="31" fontSize="24" fill="#fff" transform="skewX(-8)" textLength="68">同花顺</text>
      <text x="53" y="73" fontSize="30" fill="#222" transform="skewX(-10)" textLength="66">速递</text>
    </g>
  </svg>
);

const Grid = ({ ys }: { ys: number[] }) => (
  <>
    {ys.map((y) => (
      <path key={y} d={`M12 ${y}H1066`} stroke="#e4e4e4" strokeWidth="1.500" strokeDasharray="4 4" />
    ))}
  </>
);

const Candles = () => (
  <>
    {candleParts.map((part, n) =>
      part.d.split(/\s+/).map((s, i) => {
        const [x, hi, lo] = s.slice(1).split(',').map(Number);
        return (
          <rect
            key={`${n}-${i}`}
            x={part.x + x * UX - 1.600}
            y={part.y + hi * UY}
            width={lo - hi < 14 ? 2.200 : 3.200}
            height={(lo - hi) * UY}
            fill={s[0] === 'r' ? RED : GREEN}
          />
        );
      })
    )}
  </>
);

const axisPrices = [
  { text: '7.83', y: 43 },
  { text: '6.21', y: 193 },
  { text: '4.59', y: 359 },
  { text: '2.96', y: 526 },
  { text: '1.34', y: 684 },
];

const PriceChart = () => (
  <svg width="1080" height="702" viewBox="0 0 1080 702" fontFamily={FONT}>
    <rect x="13" y="1" width="1054" height="700" fill="none" stroke="#eaeaea" strokeWidth="2" />
    <Grid ys={[175.5, 351, 526.5]} />
    <path d="M12 582H1064" stroke="#bfae80" strokeWidth="2" strokeDasharray="6 6" />
    <Candles />
    <g fontSize="35" fontWeight="500" fill="#999">
      {axisPrices.map((p) => (
        <text key={p.text} x="24" y={p.y} textLength="63">{p.text}</text>
      ))}
    </g>
    <g fontSize="30" fill="#000">
      <text x="198" y="32" textLength="54">7.55</text>
      <text x="411" y="698" textLength="55">1.62</text>
    </g>
    {averages.map((line) => (
      <polyline
        key={line.color}
        points={points(line.parts)}
        fill="none"
        stroke={line.color}
        strokeWidth="3.100"
        strokeLinejoin="round"
      />
    ))}
    <g fill="none" stroke="#000" strokeWidth="3">
      <path d="M176 13.500H125M143 5l-18 8.500 18 9" />
      <path d="M389 688.500H338M356 680l-18 8.500 18 9" />
    </g>
  </svg>
);

const VolumeChart = () => (
  <svg width="1080" height="248" viewBox="0 0 1080 248">
    <path d="M13 246V1H1067V246" fill="none" stroke="#eaeaea" strokeWidth="2" />
    <Grid ys={[122.5]} />
    {volumes.map((v, i) => {
      const x = 12.200 + i * 3.003;
      const h = Math.max(v.h, 1);
      return v.up ? (
        <rect key={i} x={x - 0.200} y={246 - h} width="3.500" height={h + 0.500} fill={RED} />
      ) : (
        <g key={i}>
          <rect x={x} y={246 - h} width="3" height={h} fill="#9aba86" />
          <rect x={x + 0.900} y={246 - h} width="1.200" height={h} fill="#3d6a24" />
        </g>
      );
    })}
    <polyline points={points(volumeAverage)} fill="none" stroke="#333" strokeWidth="2.900" strokeLinejoin="round" />
  </svg>
);

const KdjChart = () => (
  <svg width="1080" height="246" viewBox="0 0 1080 246">
    <rect x="13" y="1" width="1054" height="244" fill="none" stroke="#eaeaea" strokeWidth="2" />
    <Grid ys={[122.5]} />
    {kdj.map((line) => (
      <polyline
        key={line.color}
        points={points(line.parts)}
        fill="none"
        stroke={line.color}
        strokeWidth="3"
        strokeLinejoin="round"
      />
    ))}
  </svg>
);

const controlPaths = [
  'M31 12L14 28l17 17M46 12L29 28l17 17',
  'M28 11v34M11 28h34',
  'M11 28h34',
  'M34 12L17 28l17 17',
  'M22 12l17 16-17 17',
  'M13 27V12h16M46 30v15H31',
];

const periods = ['120分', '60分', '30分', '15分', '5分', '1分'];

const App = () => {
  return (
    <Page>
      <GlobalStyle />
      <Header>
        <StatusBar>
          <Clock>12:20</Clock>
          <StatusLeftIcons />
          <StatusRight>
            <svg width="30" height="30" viewBox="0 0 30 30">
              <circle cx="15" cy="16" r="13.500" fill="#ffecec" />
              <path d="M1 6l5-5M29 6l-5-5" stroke="#ffecec" strokeWidth="3" />
              <path d="M14 9v9h6" fill="none" stroke="#f03138" strokeWidth="3" />
            </svg>
            <NetSpeed>
              <div>7.90</div>
              <div>KB/s</div>
            </NetSpeed>
            <Signal>
              5G HD
              <svg width="48" height="18" viewBox="0 0 48 18" fill="#ffecec">
                <path d="M1 8l4.500-6L10 8zM1 11l4.500 6L10 11z" />
                <rect x="13" y="9" width="5" height="8" rx="2" />
                <rect x="22" y="8" width="5" height="9" rx="2" />
                <rect x="32" y="5" width="5" height="12" rx="2" />
                <rect x="41" y="1" width="6" height="16" rx="2" />
              </svg>
            </Signal>
            <svg width="54" height="28" viewBox="0 0 54 28">
              <rect width="51" height="28" rx="8" fill="#f99a9d" />
              <path d="M51 9q3 1 3 5t-3 5z" fill="#f99a9d" />
              <path d="M8 0h24v28H8q-8 0-8-8V8q0-8 8-8z" fill="#fff" />
            </svg>
          </StatusRight>
        </StatusBar>
        <NavBar>
          <svg width="246" height="70" viewBox="0 0 246 66" fill="none" stroke="#fff" strokeWidth="4.500">
            <path d="M35 0L4 30l31 31" />
          </svg>
          <svg width="24" height="36" viewBox="0 0 24 36" fill="#fff">
            <path d="M0 18L23 0v36z" />
          </svg>
          <Title>
            <StockName>*ST元成</StockName>
            <StockCode>
              603388 <Level>L1</Level>
            </StockCode>
          </Title>
          <svg width="88" height="36" viewBox="0 0 88 36" fill="#fff">
            <path d="M23 18L0 0v36z" />
          </svg>
          <Robot />
          <svg width="134" height="66" viewBox="-68 0 134 66" fill="none" stroke="#fff" strokeWidth="4.500">
            <circle cx="29" cy="32" r="26.500" />
            <path d="M47 49l11 11" />
          </svg>
        </NavBar>
      </Header>

      <Quote>
        <PriceBlock>
          <Price>2.44</Price>
          <Change>
            <span>0.07</span>
            <span>2.95%</span>
          </Change>
        </PriceBlock>
        <Stats $width={242} $gap={37}>
          <StatRow><StatLabel>高</StatLabel><StatValue $up>2.49</StatValue></StatRow>
          <StatRow><StatLabel>低</StatLabel><StatValue>2.37</StatValue></StatRow>
          <StatRow><StatLabel>开</StatLabel><StatValue>2.37</StatValue></StatRow>
        </Stats>
        <Stats $width={241} $gap={38}>
          <StatRow><StatLabel>市值</StatLabel><StatValue>7.95亿</StatValue></StatRow>
          <StatRow><StatLabel>流通</StatLabel><StatValue>7.95亿</StatValue></StatRow>
          <StatRow><StatLabel>市盈<sup>TTM</sup></StatLabel><StatValue>亏损</StatValue></StatRow>
        </Stats>
        <Stats $width={242} $gap={0}>
          <StatRow><StatLabel>量比</StatLabel><StatValue $up>3.33</StatValue></StatRow>
          <StatRow><StatLabel>换</StatLabel><StatValue>7.49%</StatValue></StatRow>
          <StatRow><StatLabel>额</StatLabel><StatValue>5992.6万</StatValue></StatRow>
        </Stats>
      </Quote>
      <Corner />

      <NewsRow>
        <NewsLogo />
        <NewsText>异动解读：ST板块+先进封装+环保+一季<span>···</span></NewsText>
        <NewsDot />
        <svg width="25" height="25" viewBox="0 0 25 25" stroke="#999" strokeWidth="2.500">
          <path d="M1 1l23 23M24 1L1 24" />
        </svg>
      </NewsRow>
      <Band />

      <Tabs>
        <Tab $width={157}>分时</Tab>
        <ActiveTab>
          <Tab $width={139} $active>日K</Tab>
        </ActiveTab>
        <Tab $width={144}>周K</Tab>
        <Tab $width={140}>月K</Tab>
        <Tab $width={159}>五日</Tab>
        <Tab $width={218}>
          更多
          <svg width="24" height="20" viewBox="0 0 24 20">
            <path d="M12 2l10 16H2z" fill="#aaa" stroke="#aaa" strokeWidth="2" strokeLinejoin="round" />
          </svg>
        </Tab>
        <svg width="50" height="58" viewBox="0 0 50 50" fill="none" stroke="#999" strokeWidth="4" strokeLinejoin="round">
          <path d="M14 4h22l12 21-12 21H14L2 25z" />
          <circle cx="25" cy="25" r="7.500" />
        </svg>
      </Tabs>
      <Periods>
        {periods.map((p) => (
          <Period key={p}>{p}</Period>
        ))}
      </Periods>

      <Legend>
        <Picker $width={114} $height={50} $top={14}>
          <PickerText>均线</PickerText>
          <Caret />
        </Picker>
        <LegendLines>
          <LegendRow>
            <Plain>日线</Plain>
            <Tone $color="#111">M5:2.48</Tone>
            <Tone $color="#e2a021">M10:2.84</Tone>
            <Tone $color="#e8667b">M20:3.16</Tone>
            <Tone $color="#6dbf4b">M30:3.32</Tone>
          </LegendRow>
          <LegendRow>
            <Tone $color="#3677a4">M60:3.48</Tone>
            <Tone $color="#4b174f">M120:3.34</Tone>
            <Tone $color="#a9503f">M240:2.83</Tone>
          </LegendRow>
        </LegendLines>
        <Plain>前复权</Plain>
      </Legend>

      <PricePane>
        <PriceChart />
        <Controls>
          {controlPaths.map((d) => (
            <Control key={d}>
              <svg width="56" height="56" viewBox="0 0 56 56" fill="none" stroke="#5c5c5c" strokeWidth="4">
                <path d={d} />
              </svg>
            </Control>
          ))}
        </Controls>
      </PricePane>
      <Axis>
        <AxisItem $width={252} $pad={12}>
          2024<Dash>-</Dash>01<Dash>-</Dash>23
        </AxisItem>
        <AxisItem $width={160} $tick>07<Dash>-</Dash>08</AxisItem>
        <AxisItem $width={104} />
        <AxisItem $width={160} $tick>11<Dash>-</Dash>18</AxisItem>
        <AxisItem $width={104} />
        <AxisItem $width={160} $tick>03<Dash>-</Dash>31</AxisItem>
        <LatestButton>
          <svg width="38" height="36" viewBox="0 0 38 36" fill="none" stroke="#5c5c5c" strokeWidth="4">
            <path d="M1 18h25M16 6l11 12-11 12M35 1v34" />
          </svg>
        </LatestButton>
      </Axis>

      <Pane $height={258}>
        <VolumeChart />
        <PaneHead>
          <Picker $width={162} $height={48}>
            成交量
            <Caret />
          </Picker>
          <Reading $gap={14} $color={GREEN} $spacing={-0.5}>量:4910</Reading>
          <Reading $gap={20} $spacing={-0.8}>M60:12.66万</Reading>
          <Reading $gap={20} $spacing={-0.3}>换手率:</Reading>
          <Reading $gap={2} $color="#4fa8e0" $spacing={-0.5}>0.15%</Reading>
        </PaneHead>
      </Pane>
      <Pane $height={252}>
        <KdjChart />
        <PaneHead>
          <Picker $width={221} $height={48}>
            KDJ(9,3,3)
            <Caret />
          </Picker>
          <Help>?</Help>
          <Reading $gap={17} $spacing={-0.4}>K:+1.07</Reading>
          <Reading $gap={20} $color="#e8794a" $spacing={-0.2}>D:+3.83</Reading>
          <Reading $gap={21} $color="#c5447c" $spacing={-0.3}>J:−4.46</Reading>
          <Link>查看暗盘资金</Link>
        </PaneHead>
      </Pane>
      <Band />

      <Footer>
        <IndexBox>
          <svg width="27" height="15" viewBox="0 0 27 15">
            <path d="M13.500 0L27 15H0z" fill="#aaa" />
          </svg>
          <IndexName>上证指数</IndexName>
          <IndexValue>3642.10</IndexValue>
        </IndexBox>
        <Action>
          <svg width="60" height="60" viewBox="0 0 60 60" fill="none" stroke="#ddd" strokeWidth="3">
            <path d="M11 3h38q4 0 4 4v34L42 55H11q-4 0-4-4V7q0-4 4-4z" />
            <path d="M13 17h34M13 24h34M13 31h34M13 38h24" />
          </svg>
          下单
        </Action>
        <Action>
          <svg width="60" height="60" viewBox="0 0 60 60" fill="none" stroke="#ddd" strokeWidth="3">
            <path d="M19 6h22M30 22v19M20 31.500h20" />
            <rect x="3" y="11" width="54" height="42" rx="5" />
            <path d="M10 55h10M40 55h10" strokeWidth="4" />
          </svg>
          诊股
        </Action>
        <Action>
          <svg width="60" height="60" viewBox="0 0 60 60" fill="none" stroke="#ddd" strokeWidth="3">
            <rect x="7" y="6" width="46" height="46" />
            <path d="M30 16v26M17 29h26" />
          </svg>
          加自选
        </Action>
        <Action>
          <svg width="60" height="60" viewBox="0 0 60 60" fill="none" stroke="#ddd" strokeWidth="3">
            <circle cx="30" cy="29" r="24" />
            <path d="M19 22h22M19 36h22" />
          </svg>
          功能
        </Action>
        <HomeBar />
      </Footer>
    </Page>
  );
};

export default App;
